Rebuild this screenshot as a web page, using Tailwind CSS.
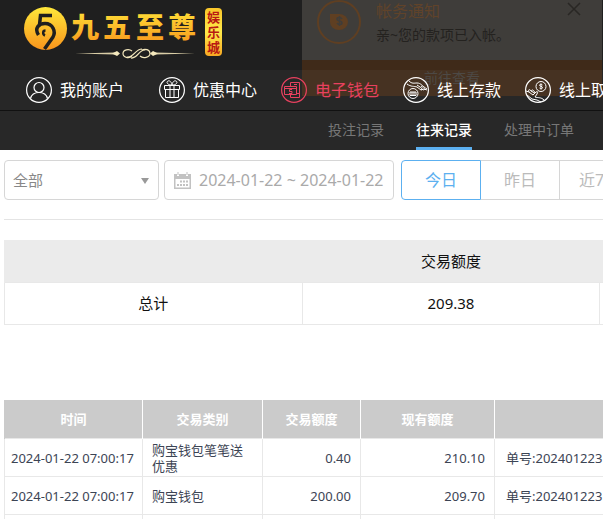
<!DOCTYPE html>
<html lang="zh-CN">
  <head>
    <meta charset="UTF-8" />
    <meta name="viewport" content="width=device-width, initial-scale=1.0" />
    <title>往来记录</title>
    <script src="https://cdn.jsdelivr.net/npm/@tailwindcss/browser@4"></script>
    <style>
      body {
        font-family: 'Noto Sans', 'Noto Sans CJK SC', sans-serif;
      }
    </style>
  </head>
  <body class="bg-white overflow-hidden">
    <header class="relative bg-[#1f1f1f]">
      <!-- notification -->
      <div class="absolute top-0 left-[302px] w-[300px] bg-[#3f3d3a]" role="status">
        <div class="flex h-[60px] gap-[15px] pl-[15px] pr-5 overflow-hidden">
          <svg class="size-11 shrink-0" viewBox="0 0 44 44" fill="none">
            <circle cx="22" cy="22" r="21" stroke="#5f3f22" stroke-width="2" />
            <path d="M13 14h9a9 8 0 1 1-9 8z" fill="#5f3f22" />
            <path d="M25 19c-1-2-5-2-5 0 0 3 5 1 5 4 0 2-4 2-5 0M22.500 16v10" stroke="#3f3d3a" stroke-width="1.500" />
          </svg>
          <div class="flex-1 whitespace-nowrap">
            <h3 class="text-base leading-[22px] text-[#60432a]">帐务通知</h3>
            <p class="text-sm leading-[26px] text-[#24221f]">亲~您的款项已入帐。</p>
          </div>
          <button type="button" aria-label="关闭" class="size-4 mt-0.5">
            <svg class="size-4" viewBox="0 0 16 16" stroke="#292724" stroke-width="1.500">
              <path d="M2 1l12 12M14 1L2 13" />
            </svg>
          </button>
        </div>
        <button type="button" class="block w-full h-9 bg-[#3f2a19] text-sm text-[#46423e]">前往查看</button>
      </div>

      <a href="#" aria-label="九五至尊娱乐城" class="relative flex h-[70px] w-[230px] pl-6 pt-1.5">
        <svg class="h-[60px] w-[204px]" viewBox="0 0 204 60">
          <defs>
            <linearGradient id="gold" x1="0" y1="0" x2="0" y2="1">
              <stop offset="0" stop-color="#ffe83a" />
              <stop offset="1" stop-color="#f8941c" />
            </linearGradient>
            <linearGradient id="badge" x1="0" y1="0" x2="0" y2="1">
              <stop offset="0" stop-color="#f9c62a" />
              <stop offset="0.5" stop-color="#ffe94a" />
              <stop offset="1" stop-color="#f7a823" />
            </linearGradient>
          </defs>
          <circle cx="21.500" cy="22.500" r="21.500" fill="url(#gold)" />
          <g fill="none" stroke="#1f1f1f" stroke-width="3.500">
            <path d="M28 9.500H16.500L15.500 19" />
            <path d="M14.500 29C10 22 15 17.500 21 17.500c8 0 11 8 8 13.500L20.500 43" />
            <path d="M21 29.500c-2.500-1-2.500-5 .5-5" stroke-width="2.500" />
          </g>
          <g fill="url(#gold)" font-family="'Noto Sans CJK SC', sans-serif" font-weight="900" font-size="28">
            <text x="47" y="32">九</text>
            <text x="79" y="32">五</text>
            <text x="112" y="32">至</text>
            <text x="144" y="32">尊</text>
          </g>
          <path d="M51 47.500l40-1v2zM171 47.500l-40-1v2z" fill="#d9cda6" />
          <path d="M88 47.500l5-2.500 3 2.500-3 2.500zM134 47.500l-5-2.500-3 2.500 3 2.500z" fill="#f4e8bd" />
          <path d="M108 50c-3 3-9 1.500-9-2.500s6-5 9-2.500M103 51c7 1 8-8 15-8M107 52c7 1 7-8 14-8M116 50c3 3 10 1.500 10-2.500s-5-5-8-3.500" stroke="#f4e8bd" stroke-width="1.200" fill="none" />
          <rect x="181" y="2" width="17" height="48" rx="4" fill="url(#badge)" />
          <g fill="#b81912" font-family="'Noto Sans CJK SC', sans-serif" font-weight="700" font-size="13">
            <text x="183" y="16">娱</text>
            <text x="183" y="31">乐</text>
            <text x="183" y="46">城</text>
          </g>
        </svg>
      </a>

      <nav class="relative flex h-10 items-center gap-6 bg-white/4 pl-[26px] text-base text-white whitespace-nowrap">
        <a href="#" class="mr-[11px] flex items-center gap-2">
          <svg class="size-[26px]" viewBox="0 0 26 26" fill="none" stroke="currentColor">
            <circle cx="13" cy="13" r="12.400" stroke-width="1.200" />
            <circle cx="13" cy="10.500" r="5" stroke-width="1.200" />
            <path d="M4.500 21.500c1-4 4-6 8.500-6s7.500 2 8.500 6" stroke-width="1.200" />
          </svg>
          我的账户
        </a>
        <a href="#" class="flex items-center gap-2">
          <svg class="size-[26px]" viewBox="0 0 26 26" fill="none" stroke="currentColor">
            <circle cx="13" cy="13" r="12.400" stroke-width="1.200" />
            <path d="M5.500 8.500h15v4h-15zM6.500 12.500v8h13v-8M11 8.500v12M15 8.500v12M13 8c-5 0-6-3-4-4s4 2 4 4c0-2 2-5 4-4s1 4-4 4" />
          </svg>
          优惠中心
        </a>
        <a href="#" class="flex items-center gap-2 text-[#e8415f]">
          <svg class="size-[26px]" viewBox="0 0 26 26" fill="none" stroke="currentColor">
            <circle cx="13" cy="13" r="12.400" stroke-width="1.200" />
            <path d="M9.500 9V5.500h9v15h-9V18M3.500 9.500h12v8h-12zM3.500 11.500h12M13 7.500h3M15.500 16.500h3" />
            <path d="M11 12.500H8.500v2H11v2H8" />
          </svg>
          电子钱包
        </a>
        <a href="#" class="flex items-center gap-2">
          <svg class="size-[26px]" viewBox="0 0 26 26" fill="none" stroke="currentColor">
            <circle cx="13" cy="13" r="12.400" stroke-width="1.200" />
            <circle cx="10" cy="16.500" r="5" />
            <path d="M7 15h6v3.500H7zM9 15v3M11 15v3" />
            <path d="M6 4c3 3 5 2 8 2 4 0 5 3 10 6M4 7c4 3 7 2 10 3l4 3c2 0 1-2-1-3l-3-2M18 12l3 1c1-1 0-2-3-4M21 12l3 1" />
          </svg>
          线上存款
        </a>
        <a href="#" class="flex items-center gap-2">
          <svg class="size-[26px]" viewBox="0 0 26 26" fill="none" stroke="currentColor">
            <circle cx="13" cy="13" r="12.400" stroke-width="1.200" />
            <circle cx="16" cy="9.500" r="5" />
            <path d="M17.500 8c-1-1-3-1-3 .3s3 .7 3 2.200-2 1.500-3 .5M16 6.500v6" />
            <path d="M1 14l3 1 4 3 3-3c2-1 2 0 1 2l-2 3c3 1 6 0 9 3M4 15c-1-2 0-3 1-2l4 3M7 15c-1-2 0-3 2-1l1 2M2 18l5 4 5 1 4 2" />
          </svg>
          线上取款
        </a>
      </nav>

      <nav class="relative flex h-10 items-end gap-8 border-t border-[#111] bg-[#282828] pl-[328px] text-sm text-[#777] whitespace-nowrap">
        <a href="#" class="h-[38px] leading-9">投注记录</a>
        <a href="#" class="h-[38px] border-b-3 border-[#5cb0f0] leading-9 font-medium text-white" aria-current="page">往来记录</a>
        <a href="#" class="h-[38px] leading-9">处理中订单</a>
      </nav>
    </header>

    <main class="w-[900px] pl-1 pt-2.5">
      <form class="flex text-base text-[#aaa]">
        <div class="relative">
          <select aria-label="交易类别" class="h-10 w-[155px] appearance-none rounded border border-[#d6d6d6] px-2 text-[15px] text-[#888]">
            <option>全部</option>
          </select>
          <svg class="pointer-events-none absolute top-[18px] right-2.5 h-1.5 w-2" viewBox="0 0 8 6" fill="#999">
            <path d="M0 0h8L4 6z" />
          </svg>
        </div>
        <label class="ml-[5px] flex h-10 w-[230px] items-center gap-2 rounded border border-[#d6d6d6] pl-[9px]">
          <svg class="size-[17px] shrink-0" viewBox="0 0 17 17" fill="#c2c2c2">
            <path fill-rule="evenodd" d="M0 2h3v2h2V2h7v2h2V2h3v15H0zM1.500 7v8.500h14V7z" />
            <path d="M3.500 0h1v3h-1zM12.500 0h1v3h-1zM6 8.500h2v2H6zM9 8.500h2v2H9zM12 8.500h2v2h-2zM3 12h2v2H3zM6 12h2v2H6zM9 12h2v2H9zM12 12h2v2h-2z" />
          </svg>
          <input type="text" aria-label="日期" value="2024-01-22 ~ 2024-01-22" class="w-full min-w-0 outline-none" />
        </label>
        <div class="ml-[7px] flex">
          <button type="button" class="h-10 w-20 rounded-l border border-[#5cb0f0] text-[#5cb0f0]">今日</button>
          <button type="button" class="h-10 w-[79px] border-y border-r border-[#d6d6d6] text-[#bbb]">昨日</button>
          <button type="button" class="h-10 w-20 border-y border-r border-[#d6d6d6] text-[#bbb]">近7日</button>
        </div>
      </form>

      <hr class="mt-[19px] border-[#e4e4e4]" />

      <table class="mt-5 w-[894px] table-fixed border-collapse text-center text-[15px] text-[#111]">
        <thead>
          <tr class="h-[42px] bg-[#ebebeb]">
            <th class="border-l border-[#ebebeb]"></th>
            <th class="font-normal">交易额度</th>
            <th></th>
          </tr>
        </thead>
        <tbody>
          <tr class="h-[42px]">
            <td class="border border-[#e8e8e8]">总计</td>
            <td class="border border-[#e8e8e8]">209.38</td>
            <td class="border border-[#e8e8e8]"></td>
          </tr>
        </tbody>
      </table>

      <table class="mt-[75px] w-[890px] table-fixed border-collapse text-[13px] leading-4 text-[#3c4454]">
        <colgroup>
          <col class="w-[138px]" />
          <col class="w-[120px]" />
          <col class="w-[98px]" />
          <col class="w-[134px]" />
          <col />
        </colgroup>
        <thead>
          <tr class="h-[39px] bg-[#cbcbcb] text-white">
            <th class="border-r border-l border-r-white border-l-[#cbcbcb]">时间</th>
            <th class="border-r border-white">交易类别</th>
            <th class="border-r border-white">交易额度</th>
            <th class="border-r border-white">现有额度</th>
            <th></th>
          </tr>
        </thead>
        <tbody>
          <tr class="h-[38px]">
            <td class="border border-[#e8e8e8] pl-1.5 whitespace-nowrap">2024-01-22 07:00:17</td>
            <td class="border border-[#e8e8e8] px-[9px]">购宝钱包笔笔送优惠</td>
            <td class="border border-[#e8e8e8] px-[9px] text-right">0.40</td>
            <td class="border border-[#e8e8e8] px-[9px] text-right">210.10</td>
            <td class="border border-[#e8e8e8] px-[11px]">单号:202401223</td>
          </tr>
          <tr class="h-[38px]">
            <td class="border border-[#e8e8e8] pl-1.5 whitespace-nowrap">2024-01-22 07:00:17</td>
            <td class="border border-[#e8e8e8] px-[9px]">购宝钱包</td>
            <td class="border border-[#e8e8e8] px-[9px] text-right">200.00</td>
            <td class="border border-[#e8e8e8] px-[9px] text-right">209.70</td>
            <td class="border border-[#e8e8e8] px-[11px]">单号:202401223</td>
          </tr>
          <tr class="h-[38px]">
            <td class="border border-[#e8e8e8]"></td>
            <td class="border border-[#e8e8e8]"></td>
            <td class="border border-[#e8e8e8]"></td>
            <td class="border border-[#e8e8e8]"></td>
            <td class="border border-[#e8e8e8]"></td>
          </tr>
        </tbody>
      </table>
    </main>
  </body>
</html>
